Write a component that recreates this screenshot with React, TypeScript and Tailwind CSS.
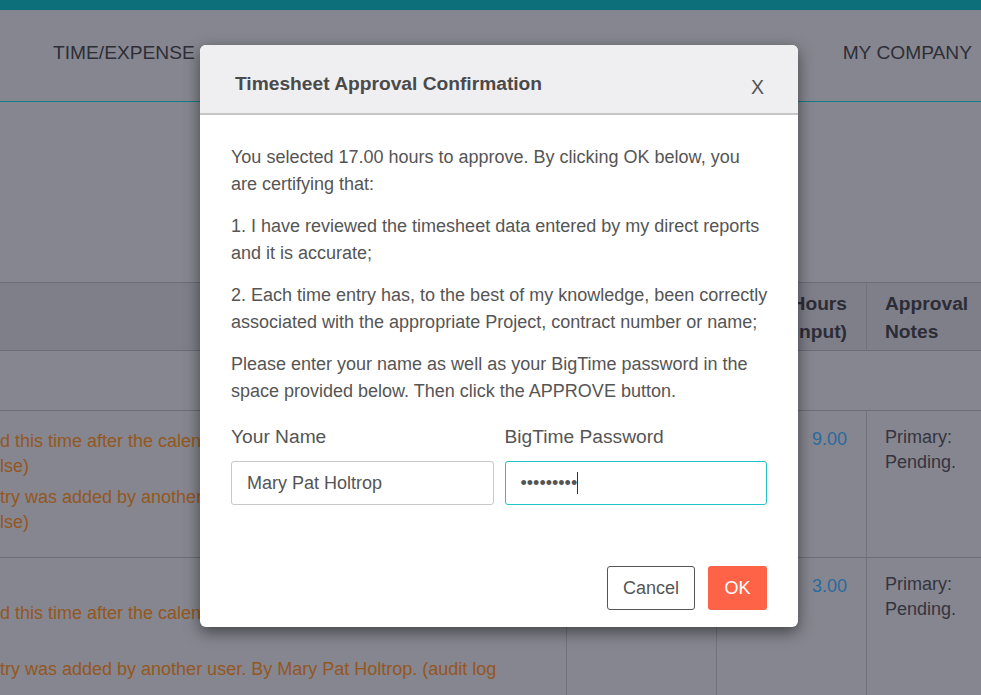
import React from 'react';

// lines that sit under the dialog are clipped where the dialog begins
const rowLines = [
    { key: 'r1', hours: '9.00', lines: [['d this time after the calendar period was closed', 'lse)'], ['try was added by another user on their behalf', 'lse)']], open: -1 },
    { key: 'r2', hours: '3.00', lines: [['', 'd this time after the calendar period was closed'], ['', 'try was added by another user. By Mary Pat Holtrop. (audit log']], open: 3 },
];

const App: React.FC = () => {
    return (
        <div className="relative w-[981px] h-[695px] overflow-hidden bg-[#868690] font-['Liberation_Sans',Arial,sans-serif] text-[18px]">
            <div className="h-[10px] bg-[#0c6f7a]" />
            <div className="h-[92px] flex items-center justify-between pl-[53px] pr-[9px] border-b border-[#137c84] text-[19.2px] text-[#2e2e36]">
                <span className="mt-[-4px]">TIME/EXPENSE</span>
                <span className="mt-[-4px]">MY COMPANY</span>
            </div>

            <div className="h-[180px]" />

            <div className="border-t border-[#6c6c77]">
                <div className="grid grid-cols-[566px_150px_150px_1fr] h-[68px] bg-[#7f7f8a] border-b border-[#6c6c77] font-bold text-[19.2px] leading-[28px] text-[#2c2c36]">
                    <div />
                    <div className="border-l border-[#72727d]" />
                    <div className="border-l border-[#72727d] flex items-center justify-end pr-[19px] pt-[3px] text-right">
                        <span>Hours<br />(input)</span>
                    </div>
                    <div className="border-l border-[#72727d] flex items-center pl-[18px] pt-[3px]">
                        <span>Approval<br />Notes</span>
                    </div>
                </div>
                <div className="h-[60px] border-b border-[#6c6c77]" />
                {rowLines.map((row, i) => (
                    <div
                        key={row.key}
                        className={`grid grid-cols-[566px_150px_150px_1fr] leading-[25px] ${i === 0 ? 'h-[147px] border-b border-[#6c6c77]' : 'h-[200px]'}`}
                    >
                        <div className="overflow-hidden whitespace-nowrap pt-[18px] text-[#93571f]">
                            {row.lines.map((group, g) => (
                                <div key={g} className={g > 0 ? 'mt-[6px]' : ''}>
                                    {group.map((line, l) => (
                                        <div key={l} className={`h-[25px] ${g * 2 + l === row.open ? '' : 'w-[200px] overflow-hidden'}`}>{line}</div>
                                    ))}
                                </div>
                            ))}
                        </div>
                        <div className="border-l border-[#72727d]" />
                        <div className="border-l border-[#72727d] pt-[16px] pr-[19px] text-right text-[#2a6a9c]">{row.hours}</div>
                        <div className="border-l border-[#72727d] pt-[14px] pl-[18px] text-[#34343e]">
                            Primary:<br />Pending.
                        </div>
                    </div>
                ))}
            </div>

            <div className="absolute left-[200px] top-[45px] w-[598px] h-[582px] rounded-[6px] bg-white shadow-[0_5px_15px_rgba(0,0,0,0.5)] overflow-hidden">
                <div className="h-[70px] flex items-center justify-between pl-[35px] pr-[34px] pt-[11px] bg-[#efeff1] border-b-2 border-[#c6c6c6]">
                    <h2 className="text-[19.2px] font-bold text-[#4a4a4a]">Timesheet Approval Confirmation</h2>
                    <span className="mt-[6px] text-[19.5px] text-[#555]">X</span>
                </div>
                <div className="px-[31px] pt-[29px] text-[18px] leading-[27px] text-[#555]">
                    <div className="mr-[-8px]">
                        <p className="mb-[15px]">You selected 17.00 hours to approve. By clicking OK below, you<br />are certifying that:</p>
                        <p className="mb-[15px]">1. I have reviewed the timesheet data entered by my direct reports and it is accurate;</p>
                        <p className="mb-[15px]">2. Each time entry has, to the best of my knowledge, been correctly associated with the appropriate Project, contract number or name;</p>
                        <p>Please enter your name as well as your BigTime password in the space provided below. Then click the APPROVE button.</p>
                    </div>

                    <div className="grid grid-cols-2 gap-[11px] mt-[20px]">
                        <div>
                            <label className="block text-[19.2px] leading-[24px] mb-[12px]">Your Name</label>
                            <div className="h-[44px] flex items-center px-[15px] border border-[#c8c8c8] rounded-[3px]">Mary Pat Holtrop</div>
                        </div>
                        <div>
                            <label className="block text-[19.2px] leading-[24px] mb-[12px]">BigTime Password</label>
                            <div className="h-[44px] flex items-center px-[15px] border border-[#22c3c8] rounded-[3px]">
                                <span>•••••••••</span>
                                <span className="inline-block w-px h-[22px] bg-[#333]" />
                            </div>
                        </div>
                    </div>

                    <div className="flex justify-end gap-[13px] mt-[61px]">
                        <button className="h-[44px] w-[88px] border border-[#555] rounded-[3px] bg-white text-[#555]">Cancel</button>
                        <button className="h-[44px] w-[59px] rounded-[3px] bg-[#ff6347] text-white">OK</button>
                    </div>
                </div>
            </div>
        </div>
    );
};

export default App;
